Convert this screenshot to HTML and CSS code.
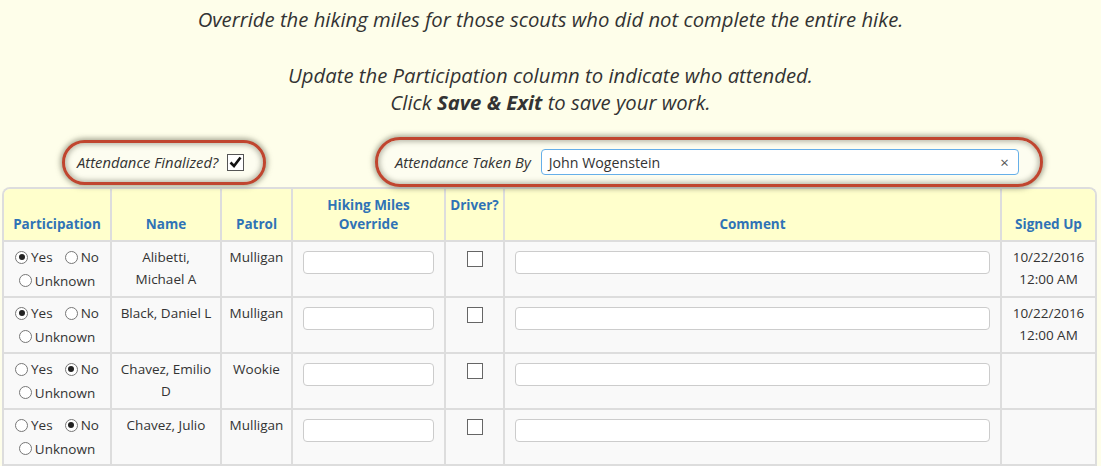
FILE: index.html
```html
<!DOCTYPE html>
<html lang="en">
<head>
    <meta charset="UTF-8">
    <title>Attendance</title>
    <link rel="stylesheet" href="styles.css">
</head>
<body>
    <div class="instructions">
        <p>Override the hiking miles for those scouts who did not complete the entire hike.</p>
        <p class="gap">Update the Participation column to indicate who attended.<br>
        Click <b>Save &amp; Exit</b> to save your work.</p>
    </div>

    <div class="controls">
        <div class="oval oval-finalized">
            <span class="label">Attendance Finalized?</span>
            <span class="big-check">
                <svg width="17" height="17" viewBox="0 0 17 17"><rect x="0.5" y="0.5" width="16" height="16" fill="#fff" stroke="#555"/><path d="M3.5 8.5 L7 12 L13.5 3.5" fill="none" stroke="#111" stroke-width="2.6"/></svg>
            </span>
        </div>
        <div class="oval oval-taken">
            <span class="label">Attendance Taken By</span>
            <div class="select-box">
                <span>John Wogenstein</span>
                <span class="clear">&times;</span>
            </div>
        </div>
    </div>

    <div class="table-wrap">
        <table class="roster">
            <colgroup>
                <col class="c-part">
                <col class="c-name">
                <col class="c-patrol">
                <col class="c-miles">
                <col class="c-driver">
                <col>
                <col class="c-signed">
            </colgroup>
            <thead>
                <tr>
                    <th>Participation</th>
                    <th>Name</th>
                    <th>Patrol</th>
                    <th>Hiking Miles<br>Override</th>
                    <th>Driver?<br>&nbsp;</th>
                    <th>Comment</th>
                    <th>Signed Up</th>
                </tr>
            </thead>
            <tbody>
                <tr>
                    <td><label class="opt"><span class="radio on"></span>Yes</label><label class="opt"><span class="radio"></span>No</label><br><label class="opt"><span class="radio"></span>Unknown</label></td>
                    <td>Alibetti,<br>Michael A</td>
                    <td>Mulligan</td>
                    <td><input type="text" class="field"></td>
                    <td><span class="box"></span></td>
                    <td><input type="text" class="field"></td>
                    <td>10/22/2016<br>12:00 AM</td>
                </tr>
                <tr>
                    <td><label class="opt"><span class="radio on"></span>Yes</label><label class="opt"><span class="radio"></span>No</label><br><label class="opt"><span class="radio"></span>Unknown</label></td>
                    <td>Black, Daniel L</td>
                    <td>Mulligan</td>
                    <td><input type="text" class="field"></td>
                    <td><span class="box"></span></td>
                    <td><input type="text" class="field"></td>
                    <td>10/22/2016<br>12:00 AM</td>
                </tr>
                <tr>
                    <td><label class="opt"><span class="radio"></span>Yes</label><label class="opt"><span class="radio on"></span>No</label><br><label class="opt"><span class="radio"></span>Unknown</label></td>
                    <td>Chavez, Emilio<br>D</td>
                    <td>Wookie</td>
                    <td><input type="text" class="field"></td>
                    <td><span class="box"></span></td>
                    <td><input type="text" class="field"></td>
                    <td></td>
                </tr>
                <tr>
                    <td><label class="opt"><span class="radio"></span>Yes</label><label class="opt"><span class="radio on"></span>No</label><br><label class="opt"><span class="radio"></span>Unknown</label></td>
                    <td>Chavez, Julio</td>
                    <td>Mulligan</td>
                    <td><input type="text" class="field"></td>
                    <td><span class="box"></span></td>
                    <td><input type="text" class="field"></td>
                    <td></td>
                </tr>
            </tbody>
        </table>
    </div>
</body>
</html>
```

FILE: styles.css
```css
body {
    margin: 0;
    background-color: #fefeea;
    font-family: "Open Sans", Arial, sans-serif;
    color: #333;
    font-size: 13.5px;
}
.instructions {
    text-align: center;
    font-style: italic;
    font-size: 20.3px;
    line-height: 27px;
    padding-top: 6px;
}
.instructions p {
    margin: 0;
}
.instructions .gap {
    margin-top: 29px;
}
.controls {
    display: flex;
    align-items: center;
    height: 50px;
    margin-top: 21px;
}
.oval {
    display: flex;
    align-items: center;
    border: 3px solid #c0452f;
    border-radius: 26px;
    box-shadow: 0 0 5px 2px rgba(110, 110, 90, 0.55), inset 0 0 5px 2px rgba(110, 110, 90, 0.45);
    background-color: #fdfdf0;
    box-sizing: border-box;
}
.oval .label {
    font-style: italic;
    font-size: 14.8px;
}
.oval-finalized {
    margin-left: 62px;
    width: 204px;
    height: 45px;
    padding-left: 12px;
}
.big-check {
    margin-left: 9px;
    height: 17px;
}
.oval-taken {
    margin-left: 109px;
    width: 668px;
    height: 50px;
    padding-left: 17px;
}
.select-box {
    margin-left: 10px;
    width: 478px;
    height: 26px;
    box-sizing: border-box;
    border: 1px solid #66afe9;
    border-radius: 4px;
    background-color: #fff;
    display: flex;
    align-items: center;
    justify-content: space-between;
    padding: 0 9px 0 7px;
    font-size: 14.2px;
}
.select-box .clear {
    font-size: 15px;
    color: #555;
}
.table-wrap {
    margin: 0 4px 0 2px;
    border: 2px solid #ddd;
    border-bottom: none;
    border-radius: 8px 8px 0 0;
    overflow: hidden;
}
.roster {
    width: 100%;
    border-collapse: collapse;
    table-layout: fixed;
}
.roster th, .roster td {
    border: 2px solid #ddd;
    text-align: center;
}
.roster tr > :first-child {
    border-left: none;
}
.roster tr > :last-child {
    border-right: none;
}
.roster thead th {
    border-top: none;
    background-color: #ffffcc;
    color: #2f73b6;
    font-weight: bold;
    font-size: 13.5px;
    height: 45px;
    vertical-align: bottom;
    padding: 0 2px 6px;
    line-height: 19px;
}
.roster td {
    background-color: #f9f9f9;
    vertical-align: top;
    height: 56px;
    padding: 4px 2px 0;
    line-height: 22px;
    box-sizing: border-box;
}
.c-part { width: 107px; }
.c-name { width: 110px; }
.c-patrol { width: 71px; }
.c-miles { width: 153px; }
.c-driver { width: 59px; }
.c-signed { width: 94px; }
.opt {
    display: inline-flex;
    align-items: center;
    margin: 0 6px;
}
.radio {
    display: inline-block;
    width: 13px;
    height: 13px;
    box-sizing: border-box;
    border: 1px solid #777;
    border-radius: 50%;
    background-color: #fff;
    margin-right: 3px;
    position: relative;
}
.radio.on::after {
    content: "";
    position: absolute;
    left: 2.5px;
    top: 2.5px;
    width: 6px;
    height: 6px;
    border-radius: 50%;
    background-color: #222;
}
.field {
    display: block;
    margin: 5px auto 0;
    width: calc(100% - 16px);
    height: 23px;
    box-sizing: border-box;
    border: 1px solid #ccc;
    border-radius: 4px;
    background-color: #fff;
}
.box {
    display: inline-block;
    width: 16px;
    height: 16px;
    box-sizing: border-box;
    border: 1px solid #666;
    background-color: #fff;
    margin-top: 5px;
}
```
